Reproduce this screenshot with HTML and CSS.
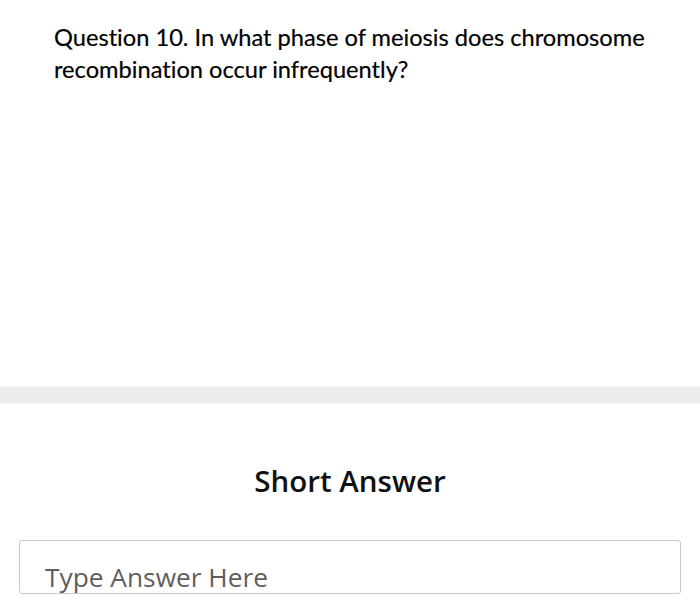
FILE: index.html
```html
<!DOCTYPE html>
<html>
<head>
<meta charset="utf-8">
<link rel="stylesheet" href="styles.css">
</head>
<body>
<div class="page">
  <section class="question">
    <p class="question-text">Question 10. In what phase of meiosis does chromosome recombination occur infrequently?</p>
  </section>
  <div class="divider"></div>
  <section class="answer">
    <h2 class="answer-title">Short Answer</h2>
    <div class="answer-box">
      <span class="placeholder">Type Answer Here</span>
    </div>
  </section>
</div>
</body>
</html>
```

FILE: styles.css
```css
html, body {
  margin: 0;
  padding: 0;
  background: #ffffff;
}
.page {
  width: 700px;
  height: 609px;
  overflow: hidden;
  display: flex;
  flex-direction: column;
}
.question {
  height: 386px;
  padding: 21px 20px 0 54px;
  box-sizing: border-box;
}
.question-text {
  margin: 0;
  font-family: Lato, "Open Sans", sans-serif;
  font-variant-ligatures: none;
  font-size: 23.65px;
  line-height: 32px;
  color: #000;
  width: 620px;
  -webkit-text-stroke: 0.2px #000;
}
.divider {
  height: 18px;
  background: #ececec;
  border-top: 1px solid #f3f3f3;
  border-bottom: 1px solid #f3f3f3;
  box-sizing: border-box;
}
.answer {
  display: flex;
  flex-direction: column;
  align-items: center;
  padding: 0 19px;
}
.answer-title {
  margin: 58px 0 0;
  font-family: "Open Sans", sans-serif;
  font-weight: 600;
  font-size: 29.5px;
  line-height: 38px;
  color: #111;
}
.answer-box {
  align-self: stretch;
  margin-top: 40px;
  height: 54px;
  border: 1px solid #c8c8c8;
  border-radius: 3px;
  box-sizing: border-box;
  display: flex;
  align-items: flex-end;
  padding-left: 25px;
  overflow: hidden;
}
.placeholder {
  font-family: "Open Sans", sans-serif;
  font-size: 26.3px;
  line-height: 30px;
  color: #5e5e5e;
  margin-bottom: 1px;
}
```
